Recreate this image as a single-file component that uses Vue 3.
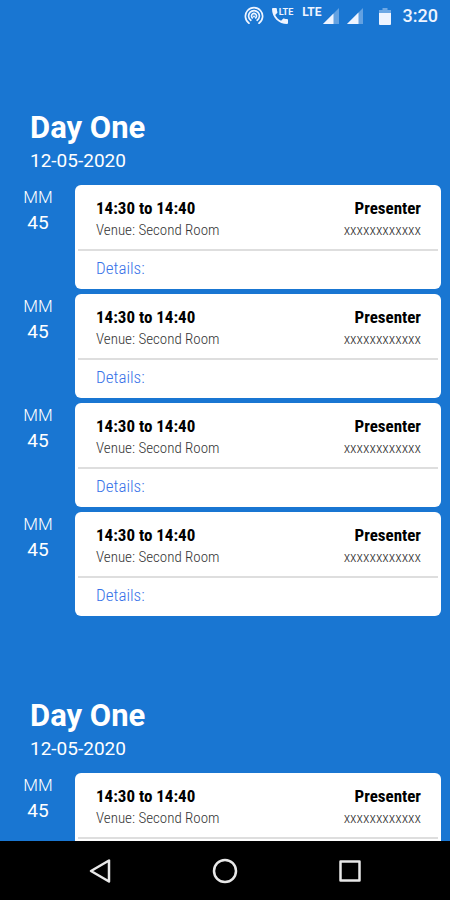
<script setup>
const sessions = (count) =>
  Array.from({ length: count }, (_, i) => ({
    id: i,
    unit: 'MM',
    minutes: '45',
    time: '14:30 to 14:40',
    venue: 'Venue: Second Room',
    role: 'Presenter',
    presenter: 'xxxxxxxxxxxx',
  }))

const days = [
  { id: 1, title: 'Day One', date: '12-05-2020', sessions: sessions(4) },
  { id: 2, title: 'Day One', date: '12-05-2020', sessions: sessions(1) },
]
</script>

<template>
  <div class="screen">
    <header class="status">
      <svg class="hotspot" width="20" height="20" viewBox="0 0 20 20" fill="none" stroke="currentColor" stroke-width="1.7" stroke-linecap="round">
        <path d="M5 17.2A8.600 8.600 0 1 1 15 17.2" />
        <path d="M6.800 14.300A5.400 5.400 0 1 1 13.200 14.300" />
        <path d="M8.300 11.800A2.500 2.500 0 1 1 11.700 11.800" />
        <circle cx="10" cy="10.500" r="1" fill="currentColor" stroke="none" />
      </svg>
      <span class="call">
        <svg width="16" height="16" viewBox="3 3 18 18" fill="currentColor">
          <path d="M6.620 10.790c1.440 2.830 3.760 5.140 6.590 6.590l2.200-2.200c.27-.27.67-.36 1.020-.24 1.120.37 2.330.57 3.570.57.55 0 1 .45 1 1V20c0 .55-.45 1-1 1-9.390 0-17-7.610-17-17 0-.55.45-1 1-1h3.500c.55 0 1 .45 1 1 0 1.250.2 2.450.57 3.570.11.35.03.74-.25 1.020l-2.200 2.200z" />
        </svg>
        <span class="call-lte">LTE</span>
      </span>
      <span class="lte">LTE</span>
      <svg class="signal" width="16" height="16" viewBox="0 0 16 16" fill="currentColor">
        <path d="M0 16L16 0V16Z" opacity=".35" />
        <path d="M0 16L10.500 5.500V16Z" />
      </svg>
      <svg class="signal second" width="16" height="16" viewBox="0 0 16 16" fill="currentColor">
        <path d="M0 16L16 0V16Z" opacity=".35" />
        <path d="M0 16L11.500 4.500V16Z" />
      </svg>
      <svg class="battery" width="12" height="17" viewBox="0 0 12 17" fill="currentColor">
        <path d="M3.500 0h5v2H12v4H0V2h3.500z" opacity=".4" />
        <path d="M0 5h12v11a1 1 0 0 1-1 1H1a1 1 0 0 1-1-1z" />
      </svg>
      <time class="clock">3:20</time>
    </header>

    <main class="agenda">
      <section v-for="day in days" :key="day.id" class="day">
        <h2 class="title">{{ day.title }}</h2>
        <p class="date">{{ day.date }}</p>
        <ul class="list">
          <li v-for="s in day.sessions" :key="s.id" class="row">
            <div class="length">
              <span class="unit">{{ s.unit }}</span>
              <span class="minutes">{{ s.minutes }}</span>
            </div>
            <article class="card">
              <div class="info">
                <div class="slot">
                  <strong>{{ s.time }}</strong>
                  <span>{{ s.venue }}</span>
                </div>
                <div class="slot end">
                  <strong>{{ s.role }}</strong>
                  <span>{{ s.presenter }}</span>
                </div>
              </div>
              <a class="details" href="#">Details:</a>
            </article>
          </li>
        </ul>
      </section>
    </main>

    <nav class="nav">
      <button type="button" aria-label="Back">
        <svg width="24" height="26" viewBox="0 0 24 26"><path d="M21 2.500V23.500L3 13Z" /></svg>
      </button>
      <button type="button" aria-label="Home">
        <svg width="26" height="26" viewBox="0 0 26 26"><circle cx="13" cy="13" r="11" /></svg>
      </button>
      <button type="button" aria-label="Recent apps">
        <svg width="24" height="24" viewBox="0 0 24 24"><path d="M2.500 2.500h19v19h-19z" /></svg>
      </button>
    </nav>
  </div>
</template>

<style>
body {
  background: #1976d2;
}
</style>

<style scoped>
.screen {
  display: flex;
  flex-direction: column;
  height: 100vh;
  background: #1976d2;
  color: #fff;
  font-family: Roboto, "Liberation Sans", sans-serif;
}
.status {
  display: flex;
  flex: none;
  align-items: center;
  justify-content: flex-end;
  height: 32px;
  padding-right: 12px;
  color: #eef4ff;
}
.call {
  display: flex;
  align-items: flex-start;
  margin: 0 9px 0 8px;
}
.call-lte {
  margin-left: -9px;
  font-size: 9px;
  line-height: 9px;
  font-weight: 700;
}
.lte {
  align-self: flex-start;
  padding-top: 6px;
  font-size: 12px;
  line-height: 12px;
  font-weight: 700;
}
.signal {
  margin-left: 1px;
}
.second {
  margin: 0 16px 0 8px;
}
.clock {
  margin-left: 12px;
  font-size: 18px;
  line-height: 24px;
  font-weight: 500;
}
.agenda {
  flex: 1;
  min-height: 0;
  overflow-y: auto;
  scrollbar-width: none;
}
.day {
  padding: 78px 9px 4px 0;
}
.title {
  margin: 0;
  padding-left: 30px;
  font-size: 31px;
  line-height: 36px;
  font-weight: 700;
}
.date {
  margin: 0;
  padding: 4px 0 13px 30px;
  font-size: 19px;
  line-height: 22px;
}
.list {
  display: flex;
  flex-direction: column;
  gap: 5px;
  margin: 0;
  padding: 0;
  list-style: none;
}
.row {
  display: flex;
}
.length {
  display: flex;
  flex: none;
  flex-direction: column;
  width: 76px;
  margin-right: -1px;
  text-align: center;
  font-size: 19px;
  line-height: 25px;
}
.unit {
  font-size: 17px;
  font-weight: 300;
}
.card {
  flex: 1;
  min-width: 0;
  padding: 0 3px;
  border-radius: 6px;
  background: #fff;
  color: #000;
  font-family: "Roboto Condensed", Roboto, "Liberation Sans", sans-serif;
}
.info {
  display: flex;
  justify-content: space-between;
  padding: 12px 17px 8px 18px;
  border-bottom: 2px solid #dedede;
}
.slot {
  display: flex;
  flex-direction: column;
  font-size: 15px;
  line-height: 22px;
}
.slot strong {
  font-size: 17px;
  font-weight: 700;
}
.slot span {
  color: #333;
  font-weight: 300;
}
.end {
  text-align: right;
}
.details {
  display: block;
  padding: 5px 18px 9px;
  color: #3872e8;
  font-size: 17px;
  line-height: 24px;
  font-weight: 300;
  text-decoration: none;
}
.nav {
  display: grid;
  flex: none;
  grid-template-columns: repeat(3, 125px);
  justify-content: center;
  height: 59px;
  background: #000;
}
.nav button {
  display: flex;
  align-items: center;
  justify-content: center;
  padding: 0;
  border: 0;
  background: none;
  color: #e8e8e8;
}
.nav svg {
  fill: none;
  stroke: currentColor;
  stroke-width: 2.5px;
  stroke-linejoin: round;
}
</style>
